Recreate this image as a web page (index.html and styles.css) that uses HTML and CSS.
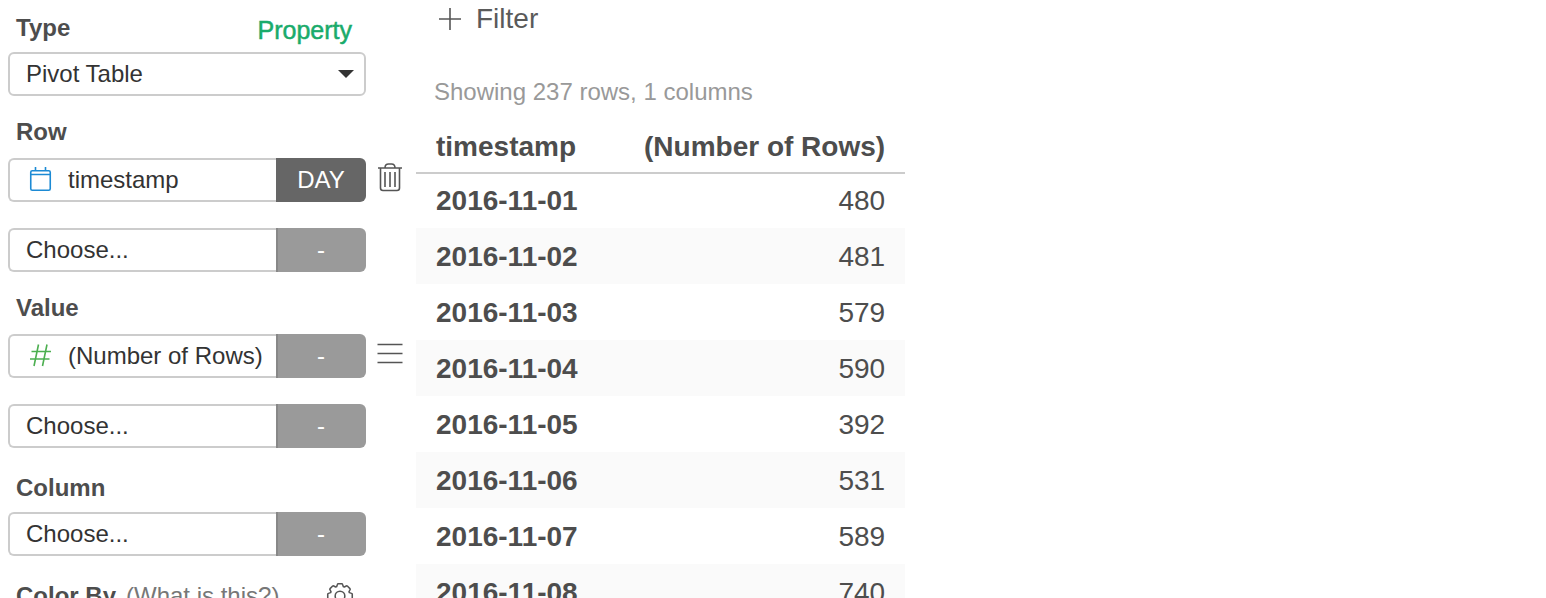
FILE: index.html
```html
<!DOCTYPE html>
<html lang="en">
<head>
<meta charset="utf-8">
<title>Pivot Table</title>
<link rel="stylesheet" href="styles.css">
</head>
<body>
<div class="app">
  <form class="panel">
    <section class="group">
      <div class="group-head">
        <label class="group-label" for="type">Type</label>
        <a class="property" href="#property">Property</a>
      </div>
      <div class="row">
        <div class="field field-type">
          <select id="type"><option>Pivot Table</option></select>
          <svg class="caret" viewBox="0 0 16 8" aria-hidden="true"><path d="M0 0h16L8 8z"/></svg>
        </div>
      </div>
    </section>

    <section class="group group-multi">
      <div class="group-head"><label class="group-label" for="row1">Row</label></div>
      <div class="row">
        <div class="field">
          <svg class="kind kind-date" viewBox="0 0 24 26" aria-hidden="true"><rect x="2.750" y="3.750" width="19.500" height="19.500" rx="1.500"/><path d="M2.750 7.500h19.500M7.500 0v3.500M17.500 0v3.500"/></svg>
          <select id="row1"><option>timestamp</option></select>
        </div>
        <select class="func func-on" aria-label="Row date unit"><option>DAY</option></select>
        <button class="action" type="button" aria-label="Remove row">
          <svg viewBox="0 0 28 30" aria-hidden="true"><path d="M2 6h24M9 6C9 3 10.500 2 12.500 2h3C17.500 2 19 3 19 6M4.500 6v20q0 2.500 2.500 2.500h14q2.500 0 2.500-2.500V6M9 10v15M14 10v15M19 10v15"/></svg>
        </button>
      </div>
      <div class="row">
        <div class="field"><select aria-label="Second row"><option>Choose...</option></select></div>
        <select class="func" aria-label="Second row unit"><option>-</option></select>
      </div>
    </section>

    <section class="group group-multi">
      <div class="group-head"><label class="group-label" for="value1">Value</label></div>
      <div class="row">
        <div class="field">
          <svg class="kind kind-number" viewBox="0 0 24 26" aria-hidden="true"><path d="M3.500 8.500h19.500M2 16h19.500M10.500 1.500L6 23M19 1.500L14.500 23"/></svg>
          <select id="value1"><option>(Number of Rows)</option></select>
        </div>
        <select class="func" aria-label="Value function"><option>-</option></select>
        <button class="action" type="button" aria-label="Value menu">
          <svg viewBox="0 0 28 30" aria-hidden="true"><path d="M1.500 6.500h25M1.500 15.500h25M1.500 24.500h25"/></svg>
        </button>
      </div>
      <div class="row">
        <div class="field"><select aria-label="Second value"><option>Choose...</option></select></div>
        <select class="func" aria-label="Second value function"><option>-</option></select>
      </div>
    </section>

    <section class="group">
      <div class="group-head"><label class="group-label" for="column1">Column</label></div>
      <div class="row">
        <div class="field"><select id="column1"><option>Choose...</option></select></div>
        <select class="func" aria-label="Column function"><option>-</option></select>
      </div>
    </section>

    <section class="group">
      <div class="group-head">
        <span class="group-label">Color By</span>
        <a class="hint" href="#color-by">(What is this?)</a>
        <button class="settings" type="button" aria-label="Color settings">
          <svg viewBox="-14.500 -14.500 29 29" aria-hidden="true"><path d="M-3.500-9.700L-2.700-12Q-2.500-12.700-1.800-12.700H1.800Q2.500-12.700 2.700-12L3.500-9.700L4.400-9.300L6.500-10.400Q7.100-10.700 7.600-10.300L10.300-7.600Q10.700-7.100 10.400-6.500L9.300-4.400L9.700-3.500L12-2.700Q12.700-2.500 12.700-1.800V1.800Q12.700 2.500 12 2.700L9.700 3.500L9.300 4.400L10.400 6.500Q10.700 7.100 10.300 7.600L7.600 10.300Q7.100 10.700 6.500 10.400L4.400 9.300L3.500 9.700L2.700 12Q2.500 12.700 1.800 12.700H-1.800Q-2.500 12.700-2.700 12L-3.500 9.700L-4.400 9.300L-6.500 10.400Q-7.100 10.700-7.600 10.300L-10.300 7.600Q-10.700 7.100-10.400 6.500L-9.300 4.400L-9.700 3.500L-12 2.700Q-12.700 2.500-12.700 1.800V-1.800Q-12.700-2.500-12-2.700L-9.700-3.500L-9.300-4.400L-10.400-6.500Q-10.700-7.100-10.300-7.600L-7.600-10.300Q-7.100-10.700-6.500-10.400L-4.400-9.300Z"/><circle r="5"/></svg>
        </button>
      </div>
    </section>
  </form>

  <main class="result">
    <button class="filter" type="button">
      <svg viewBox="0 0 24 24" aria-hidden="true"><path d="M1 12h22M12 1v22"/></svg>
      Filter
    </button>
    <p class="summary">Showing 237 rows, 1 columns</p>
    <table class="pivot">
      <thead><tr><th scope="col">timestamp</th><th scope="col">(Number of Rows)</th></tr></thead>
      <tbody>
        <tr><th scope="row">2016-11-01</th><td>480</td></tr>
        <tr><th scope="row">2016-11-02</th><td>481</td></tr>
        <tr><th scope="row">2016-11-03</th><td>579</td></tr>
        <tr><th scope="row">2016-11-04</th><td>590</td></tr>
        <tr><th scope="row">2016-11-05</th><td>392</td></tr>
        <tr><th scope="row">2016-11-06</th><td>531</td></tr>
        <tr><th scope="row">2016-11-07</th><td>589</td></tr>
        <tr><th scope="row">2016-11-08</th><td>740</td></tr>
      </tbody>
    </table>
  </main>
</div>
</body>
</html>
```

FILE: styles.css
```css
* { box-sizing: border-box; }

body {
  margin: 0;
  background: #fff;
  color: #4d4d4d;
  font-family: "Liberation Sans", Arial, sans-serif;
  font-size: 24px;
  line-height: 28px;
}

select, button { font: inherit; }

button {
  padding: 0;
  border: 0;
  background: none;
  color: inherit;
  cursor: pointer;
}

a { text-decoration: none; }

svg {
  display: block;
  flex: none;
  fill: none;
  stroke: #555;
  stroke-width: 1.6;
  stroke-linejoin: round;
}

.app {
  display: flex;
  height: 100vh;
  overflow: hidden;
}

.panel {
  flex: none;
  width: 416px;
  padding: 14px 50px 0 8px;
}

.group { margin-bottom: 26px; }
.group:first-child { margin-bottom: 22px; }
.group-multi + .group-multi { margin-top: -4px; }

.group-head {
  display: flex;
  align-items: center;
  padding: 0 14px 0 8px;
  margin-bottom: 10px;
}

.group-multi .group-head { margin-bottom: 12px; }

.group-label { font-weight: bold; }

.property {
  margin-left: auto;
  padding-top: 2px;
  margin-bottom: -2px;
  color: #1aab6b;
  font-size: 25px;
  -webkit-text-stroke: 0.5px #1aab6b;
}

.hint {
  margin-left: 10px;
  color: #777;
}

.settings {
  margin-left: auto;
  margin-right: -2px;
}

.settings svg { width: 28px; height: 28px; }

.row {
  display: flex;
  height: 44px;
  margin-right: -38px;
}

.row + .row { margin-top: 26px; }

.field {
  display: flex;
  align-items: center;
  width: 268px;
  border: 2px solid #ccc;
  border-right: 0;
  border-radius: 6px 0 0 6px;
}

.field select {
  flex: 1;
  min-width: 0;
  height: 100%;
  padding: 0 0 0 16px;
  border: 0;
  background: none;
  color: #333;
  appearance: none;
}

.field-type {
  width: 358px;
  border-right: 2px solid #ccc;
  border-radius: 6px;
}

.caret {
  width: 16px;
  height: 8px;
  margin-right: 10px;
  fill: #333;
  stroke: none;
}

.kind {
  width: 24px;
  height: 26px;
  margin-left: 18px;
}

.kind-date { stroke: #1c8ad4; }
.kind-number { stroke: #4caf50; }

.func {
  width: 90px;
  padding: 0 2px 0 0;
  border: 0;
  border-left: 2px solid #888;
  border-radius: 0 6px 6px 0;
  background: #9a9a9a;
  color: #fff;
  text-align: center;
  text-align-last: center;
  appearance: none;
}

.func-on {
  border-left-color: #666;
  background: #666;
}

.action {
  display: flex;
  padding-top: 4px;
  margin-left: 10px;
}

.action svg { width: 28px; height: 30px; }

.result {
  flex: 1;
  min-width: 0;
}

.filter {
  display: flex;
  align-items: center;
  gap: 14px;
  margin: 4px 0 0 22px;
  font-size: 28px;
  line-height: 30px;
  color: #5a5a5a;
}

.filter svg {
  width: 24px;
  height: 24px;
}

.summary {
  margin: 44px 18px 14px;
  color: #999;
}

.pivot {
  border-collapse: collapse;
  font-size: 28px;
}

.pivot th, .pivot td {
  height: 56px;
  padding: 2px 20px 0;
  text-align: right;
}

.pivot th:first-child {
  min-width: 208px;
  text-align: left;
}

.pivot th:last-child { min-width: 280px; }

.pivot thead th {
  height: 52px;
  box-shadow: 0 2px 0 #ccc;
}

.pivot tbody tr:nth-child(even) { background: #fafafa; }
```
